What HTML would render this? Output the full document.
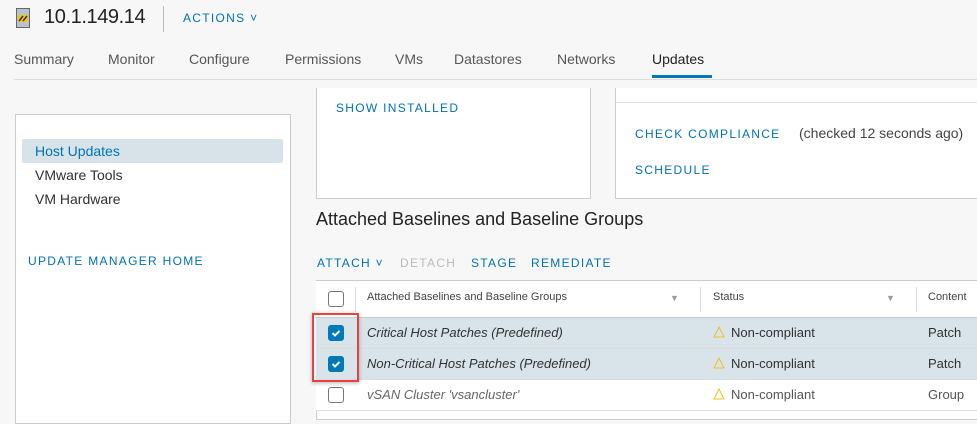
<!DOCTYPE html>
<html><head><style>
*{margin:0;padding:0;box-sizing:border-box}
body{width:977px;height:417px;overflow:hidden;background:#f7f7f7;font-family:"Liberation Sans",sans-serif;position:relative;color:#313131}
.a{position:absolute;white-space:nowrap}
.lk{color:#0072b3;font-size:12px;letter-spacing:1.3px}
.tab{font-size:14px;color:#565656;top:51px}
.box{position:absolute;background:#fff;border:1px solid #ccc}
.cb{position:absolute;width:16px;height:16px;border:1px solid #777;border-radius:3px;background:#fff}
.cb.on{background:#0079b8;border-color:#0079b8}
.row{position:absolute;left:316px;width:661px;height:31px;border-bottom:1px solid #ddd}
.it{font-style:italic;font-size:13px}
.warn{font-size:13px;color:#313131}
</style></head><body>
<svg class="a" style="left:16px;top:8px" width="14" height="20"><rect x="0.5" y="0.5" width="13" height="19" fill="#b9c3cc" stroke="#666"/><rect x="2" y="7" width="10" height="7" fill="#f4c21b"/><path d="M3 13l4-5M7 13l4-5" stroke="#333" stroke-width="1.5"/></svg>
<div class="a" style="left:44px;top:6px;font-size:20px;letter-spacing:-0.4px;color:#222">10.1.149.14</div>
<div class="a" style="left:163px;top:6px;width:1px;height:26px;background:#bbb"></div>
<div class="a lk" style="left:183px;top:11px">ACTIONS ˅</div>
<div class="a tab" style="left:14px">Summary</div>
<div class="a tab" style="left:108px">Monitor</div>
<div class="a tab" style="left:189px">Configure</div>
<div class="a tab" style="left:285px">Permissions</div>
<div class="a tab" style="left:395px">VMs</div>
<div class="a tab" style="left:454px">Datastores</div>
<div class="a tab" style="left:557px">Networks</div>
<div class="a tab" style="left:652px;color:#222">Updates</div>
<div class="a" style="left:14px;top:79px;width:963px;height:1px;background:#ddd"></div>
<div class="a" style="left:652px;top:75px;width:60px;height:3px;background:#0079b8"></div>

<div class="box" style="left:15px;top:114px;width:276px;height:310px"></div>
<div class="a" style="left:22px;top:139px;width:261px;height:24px;background:#d8e3e9;border-radius:2px"></div>
<div class="a" style="left:35px;top:143px;font-size:14px;color:#0072b3">Host Updates</div>
<div class="a" style="left:35px;top:167px;font-size:14px">VMware Tools</div>
<div class="a" style="left:35px;top:191px;font-size:14px">VM Hardware</div>
<div class="a lk" style="left:28px;top:254px">UPDATE MANAGER HOME</div>

<div class="box" style="left:316px;top:88px;width:275px;height:111px;border-top:none"></div>
<div class="a lk" style="left:336px;top:101px">SHOW INSTALLED</div>
<div class="box" style="left:615px;top:88px;width:370px;height:111px;border-top:none"></div>
<div class="a" style="left:616px;top:102px;width:361px;height:1px;background:#e4e4e4"></div>
<div class="a lk" style="left:635px;top:127px">CHECK COMPLIANCE</div>
<div class="a" style="left:799px;top:125px;font-size:14px;color:#444">(checked 12 seconds ago)</div>
<div class="a lk" style="left:635px;top:163px">SCHEDULE</div>

<div class="a" style="left:316px;top:209px;font-size:18px;color:#222">Attached Baselines and Baseline Groups</div>
<div class="a lk" style="left:317px;top:256px">ATTACH ˅</div>
<div class="a lk" style="left:400px;top:256px;color:#bbb">DETACH</div>
<div class="a lk" style="left:471px;top:256px">STAGE</div>
<div class="a lk" style="left:531px;top:256px">REMEDIATE</div>

<div class="box" style="left:316px;top:280px;width:670px;height:140px"></div>
<div class="row" style="top:281px;height:37px;border-bottom:1px solid #ccc;background:#fff"></div>
<div class="a" style="left:355px;top:287px;width:1px;height:25px;background:#ddd"></div>
<div class="a" style="left:700px;top:287px;width:1px;height:25px;background:#ddd"></div>
<div class="a" style="left:916px;top:287px;width:1px;height:25px;background:#ddd"></div>
<div class="cb" style="left:328px;top:291px"></div>
<div class="a" style="left:367px;top:291px;font-size:11px;color:#444">Attached Baselines and Baseline Groups</div>
<div class="a" style="left:670px;top:293px;font-size:9px;color:#999">▼</div>
<div class="a" style="left:713px;top:291px;font-size:11px;color:#444">Status</div>
<div class="a" style="left:886px;top:293px;font-size:9px;color:#999">▼</div>
<div class="a" style="left:928px;top:291px;font-size:11px;color:#444">Content</div>

<div class="row" style="top:318px;background:#d9e4ea"></div>
<div class="row" style="top:349px;background:#d9e4ea"></div>
<div class="row" style="top:380px;background:#fff"></div>
<div class="cb on" style="left:328px;top:325px"><svg width="14" height="14"><path d="M3.5 7l2.5 2.5 4.5-4.5" stroke="#fff" stroke-width="2" fill="none"/></svg></div>
<div class="cb on" style="left:328px;top:356px"><svg width="14" height="14"><path d="M3.5 7l2.5 2.5 4.5-4.5" stroke="#fff" stroke-width="2" fill="none"/></svg></div>
<div class="cb" style="left:328px;top:387px"></div>
<div class="a it" style="left:367px;top:325px">Critical Host Patches (Predefined)</div>
<div class="a it" style="left:367px;top:356px">Non-Critical Host Patches (Predefined)</div>
<div class="a it" style="left:367px;top:387px;color:#666">vSAN Cluster 'vsancluster'</div>
<svg class="a" style="left:713px;top:326px" width="12" height="12"><path d="M6 1L11 11H1z" fill="none" stroke="#f0c020"/></svg>
<svg class="a" style="left:713px;top:357px" width="12" height="12"><path d="M6 1L11 11H1z" fill="none" stroke="#f0c020"/></svg>
<svg class="a" style="left:713px;top:388px" width="12" height="12"><path d="M6 1L11 11H1z" fill="none" stroke="#f0c020"/></svg>
<div class="a warn" style="left:731px;top:325px">Non-compliant</div>
<div class="a warn" style="left:731px;top:356px">Non-compliant</div>
<div class="a warn" style="left:731px;top:387px;color:#555">Non-compliant</div>
<div class="a warn" style="left:928px;top:325px">Patch</div>
<div class="a warn" style="left:928px;top:356px">Patch</div>
<div class="a warn" style="left:928px;top:387px;color:#555">Group</div>

<div class="a" style="left:312px;top:313px;width:47px;height:69px;border:2px solid #e8413f;box-shadow:0 1px 4px rgba(0,0,0,.3)"></div>
</body></html>
